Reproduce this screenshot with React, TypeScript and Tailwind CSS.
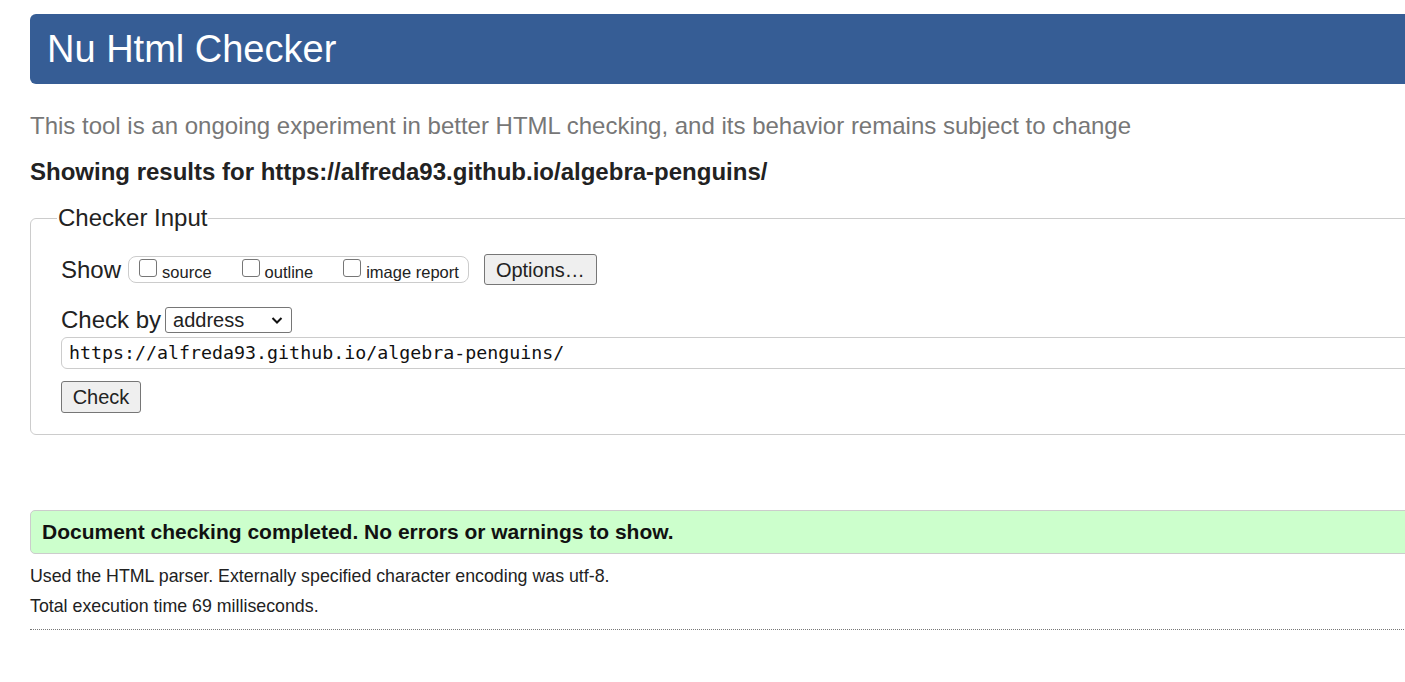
export default function App() {
  return (
    <div
      className="w-[1405px] h-[682px] overflow-hidden bg-white text-[#222]"
      style={{ fontFamily: '"Liberation Sans", Arial, sans-serif' }}
    >
      <div className="w-[1560px] pl-[30px] pt-[14px]">
        <h1 className="h-[70px] flex items-center pl-[17px] rounded-[6px] bg-[#365d95] text-white text-[38px] leading-none">
          Nu Html Checker
        </h1>
        <p className="mt-[28px] text-[24px] leading-[28px] text-[#777]">
          This tool is an ongoing experiment in better HTML checking, and its behavior remains subject to change
        </p>
        <p className="mt-[18px] text-[24px] leading-[28px] font-bold text-[#222]">
          Showing results for https://alfreda93.github.io/algebra-penguins/
        </p>

        <fieldset className="mt-[18px] border border-[#ccc] rounded-[6px] pl-[30px] pr-4 pb-[21px]">
          <legend className="ml-[-4px] px-[1px] text-[24px] leading-[28px]">Checker Input</legend>

          <div className="mt-[22px] h-[31px] flex items-center">
            <span className="text-[24px] leading-[28px] mr-[7px]">Show</span>
            <div className="flex items-start h-[27px] border border-[#ccc] rounded-[8px] pl-[10px] pr-[9px] pt-[1px]">
              <label className="flex items-start text-[16.5px] leading-[22px]">
                <span className="mt-[1px] w-[18px] h-[18px] border border-[#767676] rounded-[3px] mr-[5px] bg-white" />
                <span className="mt-[3px]">source</span>
              </label>
              <label className="flex items-start text-[16.5px] leading-[22px] ml-[30px]">
                <span className="mt-[1px] w-[18px] h-[18px] border border-[#767676] rounded-[3px] mr-[5px] bg-white" />
                <span className="mt-[3px]">outline</span>
              </label>
              <label className="flex items-start text-[16.5px] leading-[22px] ml-[30px]">
                <span className="mt-[1px] w-[18px] h-[18px] border border-[#767676] rounded-[3px] mr-[5px] bg-white" />
                <span className="mt-[3px]">image report</span>
              </label>
            </div>
            <button className="ml-[15px] h-[31px] w-[113px] border border-[#767676] rounded-[3px] bg-[#efefef] text-[20px] leading-none">
              Options…
            </button>
          </div>

          <div className="mt-[21px] h-[28px] flex items-center">
            <span className="text-[24px] leading-[28px] mr-[4px]">Check by</span>
            <div className="h-[26px] w-[127px] flex items-center justify-between border border-[#767676] rounded-[3px] pl-[7px] pr-[8px] text-[20px] leading-none">
              <span>address</span>
              <svg width="12" height="12" viewBox="0 0 12 12" fill="none" stroke="#111" strokeWidth="2">
                <path d="M1.5 4l4.5 4.5L10.5 4" />
              </svg>
            </div>
          </div>

          <div
            className="mt-[3px] h-[32px] flex items-center border border-[#ccc] rounded-[6px] pl-[7px] text-[18.3px] leading-none text-[#111]"
            style={{ fontFamily: '"DejaVu Sans Mono", "Liberation Mono", monospace' }}
          >
            https://alfreda93.github.io/algebra-penguins/
          </div>

          <button className="mt-[12px] h-[32px] w-[80px] border border-[#767676] rounded-[3px] bg-[#efefef] text-[20px] leading-none">
            Check
          </button>
        </fieldset>

        <div className="mt-[75px] h-[44px] flex items-center pl-[11px] border border-[#ccc] rounded-[5px] bg-[#ccffcc] text-[21px] font-bold text-[#111]">
          Document checking completed. No errors or warnings to show.
        </div>
        <p className="mt-[12px] text-[17.8px] leading-[20px]">
          Used the HTML parser. Externally specified character encoding was utf-8.
        </p>
        <p className="mt-[10px] text-[17.8px] leading-[20px]">Total execution time 69 milliseconds.</p>
        <div className="mt-[13px] border-t border-dotted border-[#777]" />
      </div>
    </div>
  );
}
